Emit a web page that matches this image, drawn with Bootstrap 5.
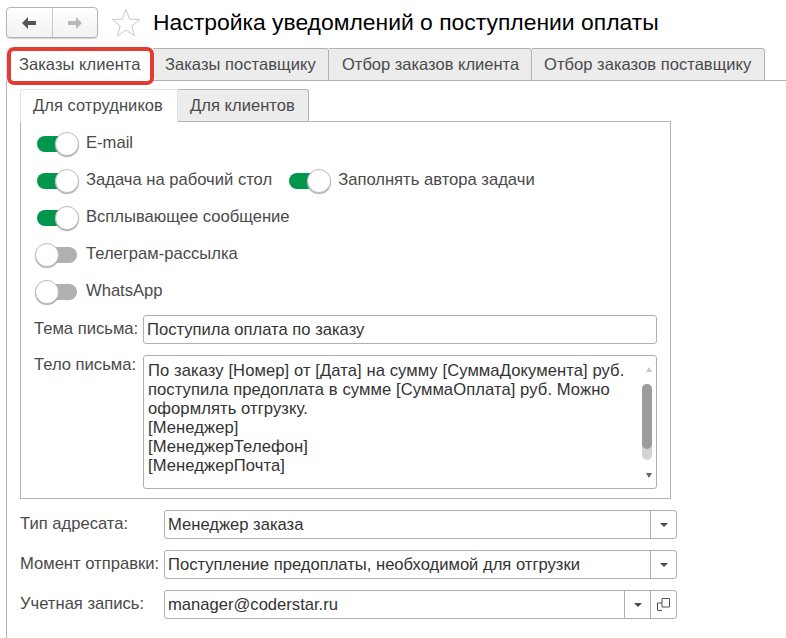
<!DOCTYPE html>
<html lang="ru">
<head>
    <meta charset="UTF-8">
    <title>Настройка уведомлений о поступлении оплаты</title>
    <link href="https://cdn.jsdelivr.net/npm/bootstrap@5.3.3/dist/css/bootstrap.min.css" rel="stylesheet">
    <style>
        html, body { height: 100%; overflow: hidden; }
        body { font-family: "Liberation Sans", Arial, sans-serif; font-size: 16.6px; color: #4a4a4a; background: #fff; }
        .page-wrap { width: 786px; height: 638px; padding: 7px 0 0 6px; }

        /* шапка */
        .nav-group { width: 92px; height: 31px; border: 1px solid #b5b5b5; border-radius: 4px; background: linear-gradient(#fff, #f1f1f1); box-shadow: 0 1px 1px #ccc; }
        .nav-group button { width: 46px; border: 0; background: none; padding: 0; display: flex; align-items: center; justify-content: center; }
        .nav-group button + button { border-left: 1px solid #c8c8c8; }
        .star-box { margin-left: 13px; width: 30px; }
        .page-title { font-size: 22.9px; color: #000; margin: 0 0 0 12px; line-height: 31px; font-weight: 400; white-space: nowrap; }

        /* вкладки */
        .tabs-1c { border-bottom: 1px solid #b3b3b3; flex-wrap: nowrap; }
        .tabs-1c .nav-link { height: 33px; margin: 0 0 -1px 0; padding: 0 12px; line-height: 30px; background: #ececec; color: #4a4a4a; border: 1px solid #b3b3b3; border-left-width: 0; border-radius: 0 3px 0 0; white-space: nowrap; font-size: 16.5px; letter-spacing: .05px; }
        .tabs-1c .nav-item:first-child .nav-link { border-left-width: 1px; border-radius: 3px 3px 0 0; }
        .tabs-1c .nav-link.active { background: #fff; color: #4a4a4a; border-bottom-color: #fff; }
        .outer-tabs { margin-top: 10px; width: 780px; }
        .outer-tabs .nav-item:nth-child(1) .nav-link { width: 147px; }
        .outer-tabs .nav-item:nth-child(2) .nav-link { width: 176px; }
        .outer-tabs .nav-item:nth-child(3) .nav-link { width: 203px; padding-left: 13px; letter-spacing: 0; }
        .outer-tabs .nav-item:nth-child(4) .nav-link { width: 233px; }
        .red-frame { position: absolute; left: 1px; top: -1px; width: 147px; height: 38px; border: 4px solid #e33d33; border-radius: 7px; pointer-events: none; }
        .outer-body { border-left: 1px solid #b3b3b3; padding: 8px 0 0 13px; height: 560px; }
        .inner-tabs { width: 651px; }
        .inner-tabs .nav-link { width: 131px; }
        .inner-tabs .nav-item:first-child .nav-link { width: 158px; }
        .inner-box { width: 651px; height: 377px; border: 1px solid #b3b3b3; border-top: 0; padding: 3px 13px 0 13px; }

        /* переключатели */
        .toggle-row { height: 37px; display: flex; align-items: center; padding-left: 1px; }
        .toggle-1c { width: 44px; height: 24px; position: relative; flex: none; margin-right: 7px; }
        .toggle-1c::before { content: ""; position: absolute; left: 2px; right: 2px; top: 4px; height: 16px; border-radius: 8px; background: #b0b0b0; }
        .toggle-1c::after { content: ""; position: absolute; left: 0; top: 0; width: 24px; height: 24px; border-radius: 50%; background: #fff; border: 1px solid #bcbcbc; box-shadow: 0 1px 1px #aaa; }
        .toggle-1c.on::before { background: #00964b; }
        .toggle-1c.on::after { left: 20px; }
        .second-toggle { margin-left: 15px; }

        /* поля */
        .field-label { white-space: nowrap; flex: none; }
        .field-1c { border: 1px solid #b0b0b0; border-radius: 3px; height: 29px; background: #fff; color: #333; display: flex; align-items: stretch; }
        .field-text { flex: 1; padding: 0 3px; line-height: 27px; white-space: nowrap; overflow: hidden; }
        .field-btn { width: 26px; border-left: 1px solid #b0b0b0; display: flex; align-items: center; justify-content: center; flex: none; }
        .caret-1c { width: 0; height: 0; border-left: 4px solid transparent; border-right: 4px solid transparent; border-top: 4px solid #4a4a4a; }
        .subject-row { margin-top: 5px; }
        .subject-row .field-label { width: 109px; }
        .subject-row .field-1c { width: 514px; }
        .letter-row { margin-top: 11px; }
        .letter-row .field-label { width: 109px; line-height: 19px; }
        .letter-box { width: 514px; height: 134px; border: 1px solid #b0b0b0; border-radius: 3px; padding: 5px 4px; color: #333; font-size: 16.6px; letter-spacing: .08px; line-height: 19px; position: relative; white-space: pre-line; }
        .scroll-up, .scroll-down { position: absolute; right: 4px; width: 0; height: 0; border-left: 3px solid transparent; border-right: 3px solid transparent; }
        .scroll-up { top: 11px; border-bottom: 5px solid #c8c8c8; }
        .scroll-down { bottom: 10px; border-top: 5px solid #666; }
        .scroll-track { position: absolute; right: 4px; top: 28px; width: 10px; height: 76px; border-radius: 5px; background: #d4d4d4; }
        .scroll-thumb { width: 10px; height: 65px; border-radius: 5px; background: #9c9c9c; }
        .bottom-fields { margin-top: 11px; }
        .bottom-row { height: 29px; margin-bottom: 11px; display: flex; align-items: center; }
        .bottom-row .field-label { width: 144px; }
        .bottom-row .field-1c { width: 513px; }
    </style>
</head>
<body>
<div class="page-wrap">

    <div class="d-flex align-items-start">
        <div class="nav-group d-flex">
            <button type="button" aria-label="Назад">
                <svg width="18" height="14" viewBox="0 0 18 14"><path d="M8 1 2 7l6 6V9h8V5H8z" fill="#555"/></svg>
            </button>
            <button type="button" aria-label="Вперёд">
                <svg width="18" height="14" viewBox="0 0 18 14"><path d="M10 1l6 6-6 6V9H2V5h8z" fill="#b9b9b9"/></svg>
            </button>
        </div>
        <div class="star-box">
            <svg width="30" height="29" viewBox="0 0 30 29" style="display:block;margin-top:1px"><path d="M15 1.5l3.6 9.6 10 .5-7.800 6.300 2.700 9.800L15 22.100 6.500 27.700l2.700-9.800-7.800-6.300 10-.5z" fill="#fff" stroke="#c9c9c9" stroke-width="1"/></svg>
        </div>
        <h1 class="page-title">Настройка уведомлений о поступлении оплаты</h1>
    </div>

    <div class="position-relative">
        <ul class="nav nav-tabs tabs-1c outer-tabs">
            <li class="nav-item"><a class="nav-link active" href="#">Заказы клиента</a></li>
            <li class="nav-item"><a class="nav-link" href="#">Заказы поставщику</a></li>
            <li class="nav-item"><a class="nav-link" href="#">Отбор заказов клиента</a></li>
            <li class="nav-item"><a class="nav-link" href="#">Отбор заказов поставщику</a></li>
        </ul>
        <div class="red-frame"></div>
    </div>

    <div class="outer-body">
        <ul class="nav nav-tabs tabs-1c inner-tabs">
            <li class="nav-item"><a class="nav-link active" href="#">Для сотрудников</a></li>
            <li class="nav-item"><a class="nav-link" href="#">Для клиентов</a></li>
        </ul>
        <div class="inner-box">
            <div class="toggle-row"><span class="toggle-1c on"></span>E-mail</div>
            <div class="toggle-row">
                <span class="toggle-1c on"></span>Задача на рабочий стол
                <span class="toggle-1c on second-toggle"></span>Заполнять автора задачи
            </div>
            <div class="toggle-row"><span class="toggle-1c on"></span>Всплывающее сообщение</div>
            <div class="toggle-row"><span class="toggle-1c"></span>Телеграм-рассылка</div>
            <div class="toggle-row"><span class="toggle-1c"></span>WhatsApp</div>

            <div class="d-flex align-items-center subject-row">
                <span class="field-label">Тема письма:</span>
                <div class="field-1c"><div class="field-text">Поступила оплата по заказу</div></div>
            </div>
            <div class="d-flex align-items-start letter-row">
                <span class="field-label">Тело письма:</span>
                <div class="letter-box">По заказу [Номер] от [Дата] на сумму [СуммаДокумента] руб.
                    поступила предоплата в сумме [СуммаОплата] руб. Можно
                    оформлять отгрузку.
                    [Менеджер]
                    [МенеджерТелефон]
                    [МенеджерПочта]
                    <span class="scroll-up"></span>
                    <div class="scroll-track"><div class="scroll-thumb"></div></div>
                    <span class="scroll-down"></span>
                </div>
            </div>
        </div>

        <div class="bottom-fields">
            <div class="bottom-row">
                <span class="field-label">Тип адресата:</span>
                <div class="field-1c">
                    <div class="field-text">Менеджер заказа</div>
                    <div class="field-btn"><span class="caret-1c"></span></div>
                </div>
            </div>
            <div class="bottom-row">
                <span class="field-label">Момент отправки:</span>
                <div class="field-1c">
                    <div class="field-text">Поступление предоплаты, необходимой для отгрузки</div>
                    <div class="field-btn"><span class="caret-1c"></span></div>
                </div>
            </div>
            <div class="bottom-row">
                <span class="field-label">Учетная запись:</span>
                <div class="field-1c">
                    <div class="field-text">manager@coderstar.ru</div>
                    <div class="field-btn"><span class="caret-1c"></span></div>
                    <div class="field-btn">
                        <svg width="13" height="13" viewBox="0 0 13 13" fill="none" stroke="#555"><path d="M5 .5h7.500v8.500H5z"/><path d="M5 5H.5v7.500h4.500"/></svg>
                    </div>
                </div>
            </div>
        </div>
    </div>
</div>
<script src="https://cdn.jsdelivr.net/npm/bootstrap@5.3.3/dist/js/bootstrap.bundle.min.js"></script>
</body>
</html>
